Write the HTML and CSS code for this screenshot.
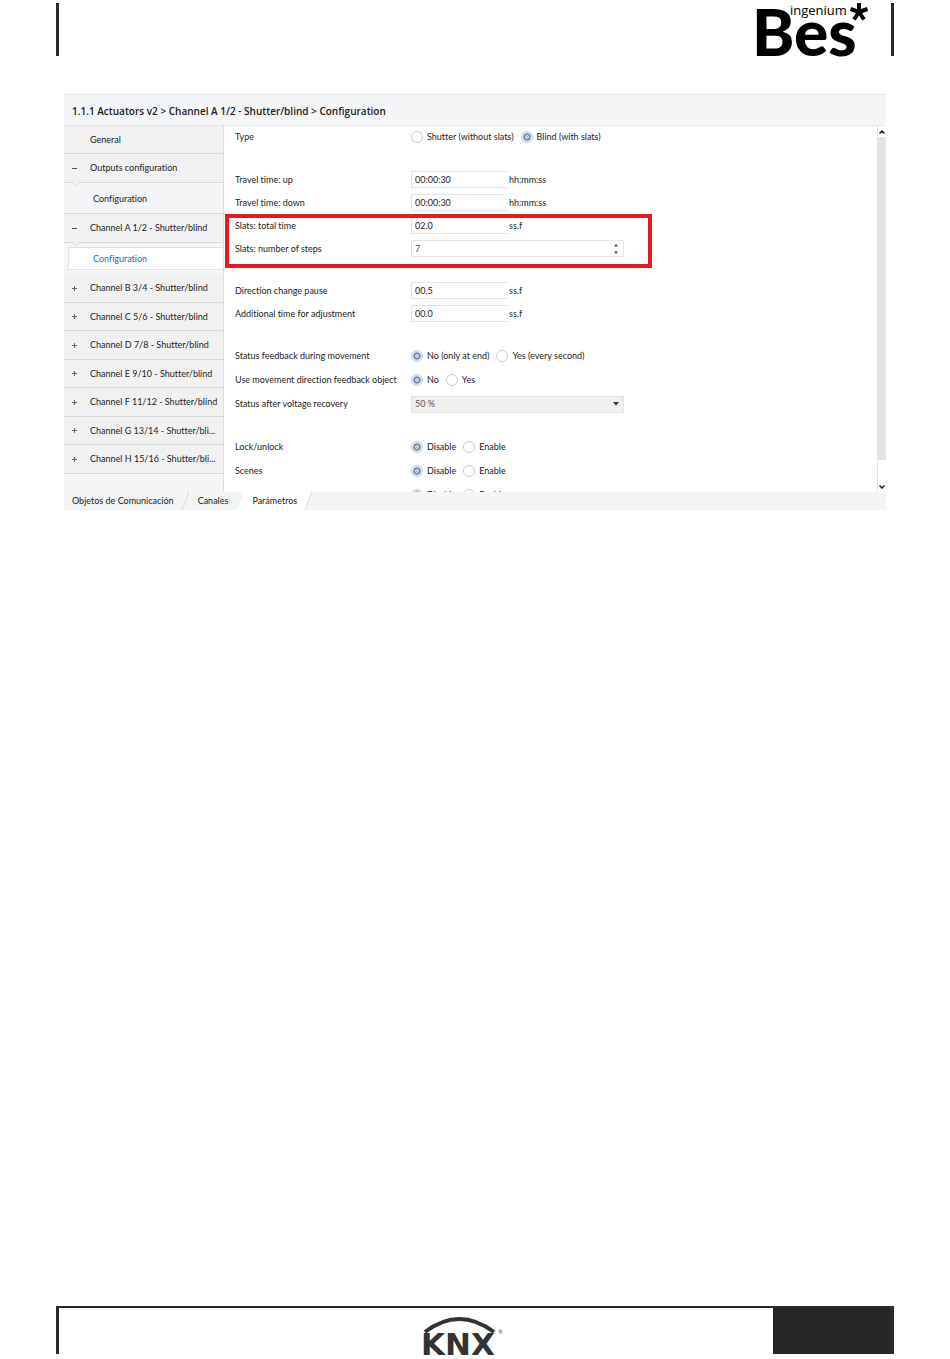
FILE: index.html
```html
<!DOCTYPE html>
<html lang="en">
<head>
    <meta charset="UTF-8">
    <meta name="viewport" content="width=device-width, initial-scale=1.0">
    <title>Shutter/blind configuration</title>
    <link rel="stylesheet" href="styles.css">
</head>
<body>

<header class="page-header">
    <svg class="logo" width="114" height="53" viewBox="0 0 114 53" role="img" aria-label="ingenium Bes">
        <text class="logo-bes" x="-3" y="53">Bes</text>
        <text class="logo-ingenium" x="35" y="12">ingenium</text>
        <path d="M104 9V0M104 9L95.500 6M104 9L112.500 6M104 9L99 16.500M104 9L109 16.500" stroke="#000" stroke-width="4"/>
    </svg>
</header>

<main>
    <section class="editor">
        <h1 class="editor-title">1.1.1 Actuators v2 &gt; Channel A 1/2 - Shutter/blind &gt; Configuration</h1>

        <div class="workspace">
            <!-- Channel tree -->
            <nav class="sidebar">
                <a class="item" href="#"><span class="sign"></span><span class="name">General</span></a>
                <a class="item open" href="#"><span class="sign minus"></span><span class="name">Outputs configuration</span></a>
                <a class="sub" href="#">Configuration</a>
                <a class="item open" href="#"><span class="sign minus"></span><span class="name">Channel A 1/2 - Shutter/blind</span></a>
                <a class="sub active" href="#">Configuration</a>
                <a class="item" href="#"><span class="sign plus"></span><span class="name">Channel B 3/4 - Shutter/blind</span></a>
                <a class="item" href="#"><span class="sign plus"></span><span class="name">Channel C 5/6 - Shutter/blind</span></a>
                <a class="item" href="#"><span class="sign plus"></span><span class="name">Channel D 7/8 - Shutter/blind</span></a>
                <a class="item" href="#"><span class="sign plus"></span><span class="name">Channel E 9/10 - Shutter/blind</span></a>
                <a class="item" href="#"><span class="sign plus"></span><span class="name">Channel F 11/12 - Shutter/blind</span></a>
                <a class="item" href="#"><span class="sign plus"></span><span class="name">Channel G 13/14 - Shutter/bli...</span></a>
                <a class="item" href="#"><span class="sign plus"></span><span class="name">Channel H 15/16 - Shutter/bli...</span></a>
            </nav>

            <!-- Parameters -->
            <form class="params">
                <div class="group">
                    <div class="row radio-row" role="radiogroup" aria-labelledby="type">
                        <span class="label" id="type">Type</span>
                        <label class="option"><input type="radio" name="type">Shutter (without slats)</label>
                        <label class="option"><input type="radio" name="type" checked>Blind (with slats)</label>
                    </div>
                </div>

                <div class="group">
                    <div class="row">
                        <label class="label" for="timeUp">Travel time: up</label>
                        <input class="time" type="text" id="timeUp" value="00:00:30"><span>hh:mm:ss</span>
                    </div>
                    <div class="row">
                        <label class="label" for="timeDown">Travel time: down</label>
                        <input class="time" type="text" id="timeDown" value="00:00:30"><span>hh:mm:ss</span>
                    </div>
                    <div class="slats">
                        <div class="row">
                            <label class="label" for="slatsTime">Slats: total time</label>
                            <input class="time" type="text" id="slatsTime" value="02.0"><span>ss.f</span>
                        </div>
                        <div class="row">
                            <label class="label" for="slatsSteps">Slats: number of steps</label>
                            <div class="wide">
                                <input class="steps" type="text" id="slatsSteps" value="7">
                                <svg class="arrows" width="6" height="12" viewBox="0 0 6 12"><path d="M1 3.500L3 1L5 3.500ZM1 8.500L3 11L5 8.500Z" fill="#444"/></svg>
                            </div>
                        </div>
                        <div class="highlight"></div>
                    </div>
                </div>

                <div class="group">
                    <div class="row">
                        <label class="label" for="pause">Direction change pause</label>
                        <input class="time" type="text" id="pause" value="00.5"><span>ss.f</span>
                    </div>
                    <div class="row">
                        <label class="label" for="adjust">Additional time for adjustment</label>
                        <input class="time" type="text" id="adjust" value="00.0"><span>ss.f</span>
                    </div>
                </div>

                <div class="group">
                    <div class="row radio-row" role="radiogroup" aria-labelledby="feedback">
                        <span class="label" id="feedback">Status feedback during movement</span>
                        <label class="option"><input type="radio" name="feedback" checked>No (only at end)</label>
                        <label class="option"><input type="radio" name="feedback">Yes (every second)</label>
                    </div>
                    <div class="row radio-row" role="radiogroup" aria-labelledby="direction">
                        <span class="label" id="direction">Use movement direction feedback object</span>
                        <label class="option"><input type="radio" name="direction" checked>No</label>
                        <label class="option"><input type="radio" name="direction">Yes</label>
                    </div>
                    <div class="row radio-row">
                        <label class="label" for="recovery">Status after voltage recovery</label>
                        <div class="wide">
                            <select id="recovery"><option>50 %</option></select>
                            <svg class="arrows" width="6" height="4" viewBox="0 0 6 4"><path d="M0 0H6L3 3.500Z" fill="#333"/></svg>
                        </div>
                    </div>
                </div>

                <div class="group">
                    <div class="row radio-row" role="radiogroup" aria-labelledby="lock">
                        <span class="label" id="lock">Lock/unlock</span>
                        <label class="option"><input type="radio" name="lock" checked>Disable</label>
                        <label class="option"><input type="radio" name="lock">Enable</label>
                    </div>
                    <div class="row radio-row" role="radiogroup" aria-labelledby="scenes">
                        <span class="label" id="scenes">Scenes</span>
                        <label class="option"><input type="radio" name="scenes" checked>Disable</label>
                        <label class="option"><input type="radio" name="scenes">Enable</label>
                    </div>
                    <div class="row radio-row">
                        <span class="label"></span>
                        <label class="option"><input type="radio" name="more" checked>Disable</label>
                        <label class="option"><input type="radio" name="more">Enable</label>
                    </div>
                </div>
            </form>

            <div class="scrollbar">
                <button type="button" aria-label="Scroll up"><svg width="6" height="4" viewBox="0 0 6 4"><path d="M0.500 3.500L3 1L5.500 3.500" fill="none" stroke="#222" stroke-width="1.500"/></svg></button>
                <div class="thumb"></div>
                <button type="button" aria-label="Scroll down"><svg width="6" height="4" viewBox="0 0 6 4"><path d="M0.500 0.500L3 3L5.500 0.500" fill="none" stroke="#222" stroke-width="1.500"/></svg></button>
            </div>
        </div>

        <nav class="tabs">
            <a href="#">Objetos de Comunicación</a>
            <a href="#">Canales</a>
            <a class="current" href="#">Parámetros</a>
        </nav>
    </section>
</main>

<footer class="page-footer">
    <svg class="knx" width="84" height="40" viewBox="0 0 84 40" role="img" aria-label="KNX">
        <path d="M4 17Q38 -9 73 17" fill="none" stroke="#333" stroke-width="4"/>
        <text class="knx-text" x="0" y="40">KNX</text>
        <text class="knx-mark" x="77" y="19">®</text>
    </svg>
    <div class="page-box"></div>
</footer>

</body>
</html>
```
FILE: styles.css
```css
* {
    box-sizing: border-box;
}
body {
    font-family: Lato, "Open Sans", sans-serif;
    font-size: 9px;
    line-height: 12px;
    font-variant-ligatures: none;
    color: #222;
    background-color: #fff;
    margin: 0;
    padding: 3px 56px 5px;
    min-height: 100vh;
    display: flex;
    flex-direction: column;
}
a {
    color: inherit;
    text-decoration: none;
}
input, select, button {
    font: inherit;
    color: inherit;
    margin: 0;
}

/* Header */
.page-header {
    display: flex;
    justify-content: flex-end;
    height: 53px;
    padding-right: 22px;
    border-left: 3px solid #2a2a2a;
    border-right: 3px solid #2a2a2a;
}
.logo {
    overflow: visible;
}
.logo-bes {
    font-size: 64px;
    font-weight: 900;
}
.logo-ingenium {
    font-family: "Open Sans", sans-serif;
    font-size: 13px;
}

/* Editor window */
main {
    flex: 1;
    padding: 38px 8px;
}
.editor-title {
    margin: 0;
    padding: 2px 8px 0;
    font-family: "Open Sans", sans-serif;
    font-size: 10px;
    font-weight: 600;
    line-height: 28px;
    background-color: #f4f5f7;
    border-top: 1px solid #e6e6e6;
}
.workspace {
    display: flex;
    height: 367px;
    border-top: 1px solid #e4e6e8;
    overflow: hidden;
}

/* Sidebar */
.sidebar {
    flex: 0 0 160px;
    background-color: #f4f5f7;
    border-right: 1px solid #dcdcdc;
}
.item {
    display: flex;
    align-items: center;
    height: 28px;
    background-color: #f1f1f1;
    border-bottom: 1px solid #d9d9d9;
}
.item:nth-child(even) {
    height: 29px;
}
.open {
    position: relative;
}
/* Notch that points to the opened sub item */
.open::after {
    content: "";
    position: absolute;
    left: 8px;
    bottom: -3px;
    width: 6px;
    height: 6px;
    background-color: #f1f1f1;
    border: solid #e2e2e2;
    border-width: 0 1px 1px 0;
    transform: rotate(45deg);
}
.sign {
    width: 26px;
    height: 5px;
    background-repeat: no-repeat;
    background-position: 8px 2px, 10px 0;
}
.minus {
    background-image: linear-gradient(#555, #555);
    background-size: 5px 1px;
}
.plus {
    background-image: linear-gradient(#666, #666), linear-gradient(#666, #666);
    background-size: 5px 1px, 1px 5px;
}
.sub {
    display: block;
    padding: 10px 29px 8px;
    border-bottom: 1px solid #d9d9d9;
}
.active {
    margin: 4px -1px 4px 4px;
    padding: 5px 24px;
    line-height: 11px;
    color: #1a6fb0;
    background-color: #fff;
    border: 1px solid #e2e2e2;
}

/* Parameters */
.params {
    flex: 1;
    margin-top: -1px;
    padding-left: 11px;
}
.group {
    margin-bottom: 19px;
}
.row {
    display: flex;
    align-items: center;
    height: 23px;
}
.radio-row {
    height: 24px;
}
.label {
    flex: 0 0 176px;
}
.option {
    display: flex;
    align-items: center;
    gap: 4px;
    margin-right: 7px;
}
.option input {
    appearance: none;
    width: 12px;
    height: 12px;
    border: 1px solid #ccc;
    border-radius: 50%;
    background-color: #fff;
}
.option input:checked {
    border-color: #bcd0e5;
    background: radial-gradient(circle, #b9cce6 2px, #4b6280 3px, #dfeaf6 4px);
}
.time, .steps, select {
    height: 17px;
    padding: 0 3px;
    border: 1px solid #e3e3e3;
    border-radius: 0;
    background-color: #fff;
}
.time {
    width: 96px;
    margin-right: 2px;
    border-right: none;
}
.wide {
    position: relative;
    width: 213px;
}
.steps, select {
    display: block;
    width: 100%;
    color: #555;
}
select {
    appearance: none;
    background-color: #f0f0f0;
}
.arrows {
    position: absolute;
    right: 5px;
    top: 0;
    bottom: 0;
    margin: auto;
    pointer-events: none;
}
.slats {
    position: relative;
}
.highlight {
    position: absolute;
    left: -10px;
    top: 0;
    width: 427px;
    height: 54px;
    border: 4px solid #e31b23;
    pointer-events: none;
}

/* Scrollbar */
.scrollbar {
    display: flex;
    flex-direction: column;
    width: 9px;
    border-left: 1px solid #e6e6e6;
}
.scrollbar button {
    display: flex;
    align-items: center;
    justify-content: center;
    height: 11px;
    padding: 0;
    border: none;
    background-color: #fff;
}
.thumb {
    flex: 1;
    margin-bottom: 21px;
    background-color: #e3e3e3;
}

/* Bottom tabs */
.tabs {
    display: flex;
    padding-left: 8px;
    line-height: 18px;
    background-color: #f4f5f7;
}
.tabs a {
    position: relative;
    z-index: 0;
    padding-right: 12px;
    margin-right: 12px;
}
.tabs a::after {
    content: "";
    position: absolute;
    z-index: -1;
    left: -12px;
    right: 0;
    top: 0;
    bottom: 0;
    border-right: 1px solid #d5d7d9;
    transform: skewX(-20deg);
}
.tabs .current::after {
    background-color: #fff;
}

/* Footer */
.page-footer {
    display: flex;
    justify-content: flex-end;
    height: 48px;
    padding-left: 94px;
    border: solid #2a2a2a;
    border-width: 2px 3px 0;
}
.knx {
    margin: 7px auto 0;
    overflow: visible;
}
.knx-text {
    font-family: "DejaVu Sans", sans-serif;
    font-size: 31px;
    font-weight: bold;
    fill: #333;
}
.knx-mark {
    font-size: 6px;
    fill: #555;
}
.page-box {
    width: 118px;
    background-color: #262626;
}
```
